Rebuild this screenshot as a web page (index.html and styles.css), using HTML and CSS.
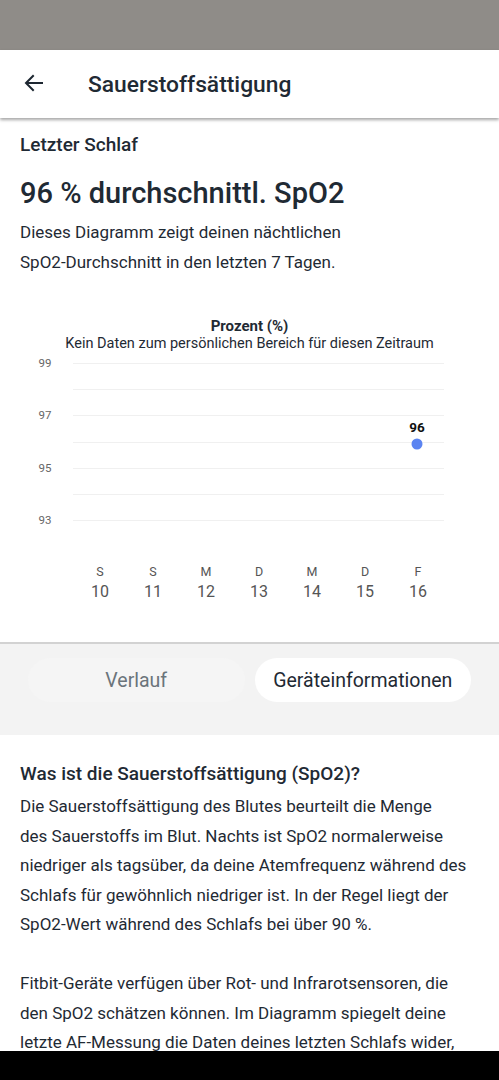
FILE: index.html
```html
<!DOCTYPE html>
<html lang="de">
<head>
    <meta charset="UTF-8">
    <meta name="viewport" content="width=device-width, initial-scale=1.0">
    <title>Sauerstoffsättigung</title>
    <link rel="stylesheet" href="styles.css">
</head>
<body>
    <div class="status-bar"></div>

    <header class="app-bar">
        <svg class="back" width="24" height="24" viewBox="0 0 24 24">
            <path d="M20 12H4.5M11 5l-7 7 7 7" fill="none" stroke="#1d2731" stroke-width="2" stroke-linecap="square"/>
        </svg>
        <h1>Sauerstoffsättigung</h1>
    </header>

    <section class="summary">
        <div class="label">Letzter Schlaf</div>
        <h2>96 % durchschnittl. SpO2</h2>
        <p>Dieses Diagramm zeigt deinen nächtlichen<br>SpO2-Durchschnitt in den letzten 7 Tagen.</p>
    </section>

    <section class="chart">
        <div class="chart-title">Prozent (%)</div>
        <div class="chart-sub">Kein Daten zum persönlichen Bereich für diesen Zeitraum</div>
        <svg class="plot" width="499" height="250" viewBox="0 0 499 250">
            <g stroke="#f0f0f0" stroke-width="1">
                <line x1="73" y1="8.5" x2="444" y2="8.5"/>
                <line x1="73" y1="34.5" x2="444" y2="34.5"/>
                <line x1="73" y1="60.5" x2="444" y2="60.5"/>
                <line x1="73" y1="87.5" x2="444" y2="87.5"/>
                <line x1="73" y1="113.5" x2="444" y2="113.5"/>
                <line x1="73" y1="139.5" x2="444" y2="139.5"/>
                <line x1="73" y1="165.5" x2="444" y2="165.5"/>
            </g>
            <g class="y-label" text-anchor="middle">
                <text x="45" y="12">99</text>
                <text x="45" y="64">97</text>
                <text x="45" y="117">95</text>
                <text x="45" y="169">93</text>
            </g>
            <text class="point-label" x="417" y="77" text-anchor="middle">96</text>
            <circle cx="417" cy="89" r="5.5" fill="#5b84f1"/>
            <g class="x-day" text-anchor="middle">
                <text x="100" y="221">S</text>
                <text x="153" y="221">S</text>
                <text x="206" y="221">M</text>
                <text x="259" y="221">D</text>
                <text x="312" y="221">M</text>
                <text x="365" y="221">D</text>
                <text x="418" y="221">F</text>
            </g>
            <g class="x-date" text-anchor="middle">
                <text x="100" y="242">10</text>
                <text x="153" y="242">11</text>
                <text x="206" y="242">12</text>
                <text x="259" y="242">13</text>
                <text x="312" y="242">14</text>
                <text x="365" y="242">15</text>
                <text x="418" y="242">16</text>
            </g>
        </svg>
    </section>

    <nav class="tabs">
        <div class="tab">Verlauf</div>
        <div class="tab active">Geräteinformationen</div>
    </nav>

    <section class="info">
        <h3>Was ist die Sauerstoffsättigung (SpO2)?</h3>
        <p>Die Sauerstoffsättigung des Blutes beurteilt die Menge<br>des Sauerstoffs im Blut. Nachts ist SpO2 normalerweise<br>niedriger als tagsüber, da deine Atemfrequenz während des<br>Schlafs für gewöhnlich niedriger ist. In der Regel liegt der<br>SpO2-Wert während des Schlafs bei über 90 %.</p>
        <p>Fitbit-Geräte verfügen über Rot- und Infrarotsensoren, die<br>den SpO2 schätzen können. Im Diagramm spiegelt deine<br>letzte AF-Messung die Daten deines letzten Schlafs wider,<br>und die Werte der vorherigen Tage werden angezeigt.</p>
    </section>

    <div class="nav-bar"></div>
</body>
</html>
```

FILE: styles.css
```css
body {
    margin: 0;
    font-family: Roboto, "Liberation Sans", sans-serif;
    color: #1f2a34;
    background-color: #fff;
    overflow: hidden;
    height: 1080px;
}
.status-bar {
    height: 50px;
    background-color: #8f8c88;
}
.app-bar {
    height: 68px;
    display: flex;
    align-items: center;
    padding-left: 22px;
    background-color: #fff;
    box-shadow: 0 2px 3px rgba(0, 0, 0, 0.35);
    position: relative;
}
.back {
    margin-top: -2px;
}
.app-bar h1 {
    margin: 0 0 0 42px;
    font-size: 22.8px;
    font-weight: 500;
}
.summary {
    padding: 15px 20px 0;
}
.label {
    font-size: 19px;
    font-weight: 500;
    line-height: 24px;
}
.summary h2 {
    margin: 18px 0 0;
    font-size: 29px;
    font-weight: 500;
    line-height: 36px;
}
.summary p {
    margin: 6px 0 0;
    font-size: 17px;
    line-height: 30px;
    white-space: nowrap;
}
.chart {
    padding-top: 40px;
    text-align: center;
}
.chart-title {
    font-size: 15px;
    font-weight: 700;
    line-height: 18px;
}
.chart-sub {
    font-size: 14.5px;
    line-height: 18px;
}
.plot {
    display: block;
    margin-top: 2px;
}
.y-label text {
    font-size: 11.5px;
    fill: #666;
}
.point-label {
    font-size: 13.5px;
    font-weight: 700;
    fill: #111;
}
.x-day text {
    font-size: 12.5px;
    fill: #555;
}
.x-date text {
    font-size: 16px;
    fill: #555;
}
.tabs {
    margin-top: 37px;
    border-top: 2px solid #d2d2d2;
    background-color: #f3f3f3;
    display: flex;
    gap: 10px;
    padding: 14px 28px 33px;
}
.tab {
    flex: 1;
    height: 44px;
    border-radius: 22px;
    display: flex;
    align-items: center;
    justify-content: center;
    font-size: 19.5px;
    color: #6b747b;
    background-color: #f5f5f5;
}
.tab.active {
    background-color: #fff;
    color: #1f2a34;
}
.info {
    padding: 24px 20px 0;
}
.info h3 {
    margin: 0 0 3px;
    font-size: 19px;
    font-weight: 500;
    line-height: 30px;
}
.info p {
    margin: 0 0 29.5px;
    font-size: 17px;
    line-height: 29.5px;
    white-space: nowrap;
}
.nav-bar {
    position: fixed;
    left: 0;
    right: 0;
    bottom: 0;
    height: 29px;
    background-color: #000;
}
```
